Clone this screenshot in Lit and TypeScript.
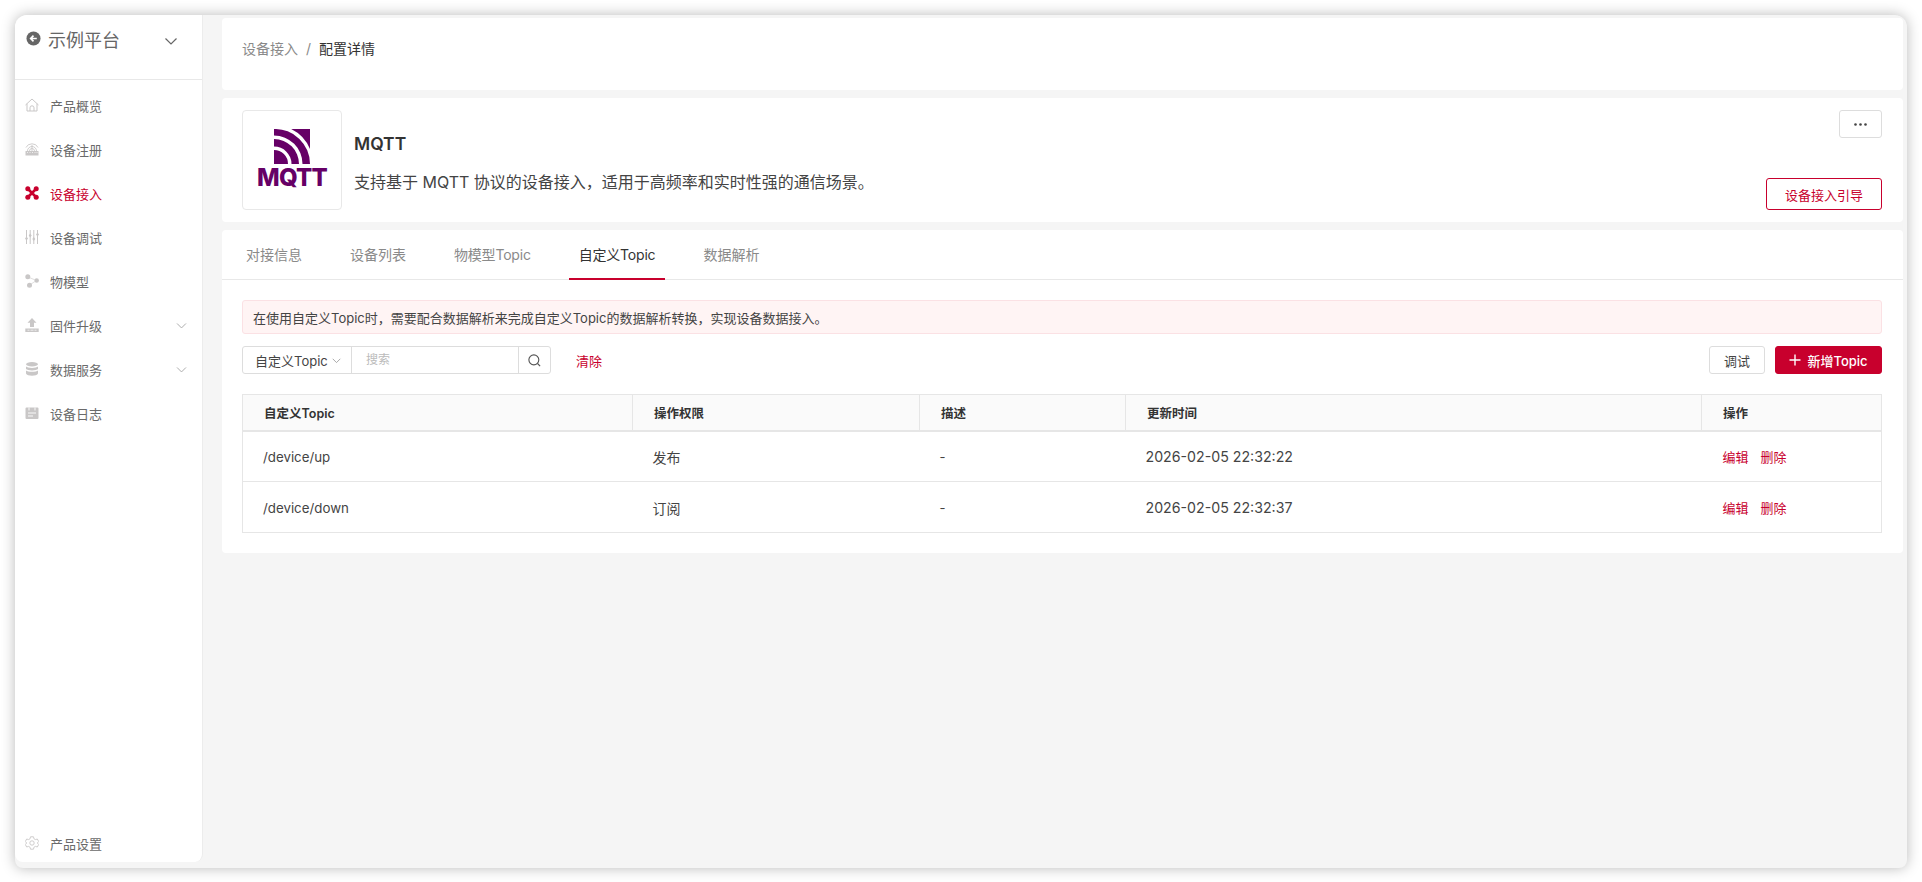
import { LitElement, html, css, svg } from "lit";
import { customElement } from "lit/decorators.js";

const chevron = (s: number) => html`<svg class="chev" width="${s}" height="${s}" viewBox="0 0 16 16" fill="none" stroke="currentColor" stroke-width="1.2"><path d="M2.5 5.5 8 11l5.5-5.5"/></svg>`;

const icons: Record<string, any> = {
  home: svg`<path d="M.5 7 7 1l6.500 6M2 5.800V13h10V5.800M5 13V9.800a2 2 0 0 1 4 0V13" fill="none" stroke="currentColor"/>`,
  reg: svg`<path d="M.5 9h13v4.500H.5z" fill="currentColor"/><path d="M2.500 9a4.500 4.500 0 0 1 9 0M4.500 9a2.500 2.500 0 0 1 5 0M1 5.500a6.500 6 0 0 1 12 0M7 3v6" fill="none" stroke="currentColor" stroke-width=".9"/><path d="M2 10.500h1M4.500 10.500h1M7 10.500h1M9.500 10.500h1M11.500 10.500h1" stroke="#fff" stroke-width=".7"/>`,
  access: svg`<path d="M3 3l8 8M11 3l-8 8" stroke="currentColor" stroke-width="2.600"/><circle cx="2.800" cy="2.800" r="2.500" fill="currentColor"/><circle cx="11.200" cy="2.800" r="2.500" fill="currentColor"/><circle cx="2.800" cy="11.200" r="2.500" fill="currentColor"/><circle cx="11.200" cy="11.200" r="2.500" fill="currentColor"/>`,
  debug: svg`<path d="M1.500 0v14M5.200 0v14M8.800 0v14M12.500 0v14" stroke="currentColor"/><path d="M1.500 6.500 3 8.500 1.500 10.500 0 8.500zM5.200 3.500l1.500 2-1.500 2-1.500-2zM8.800 7l1.500 2-1.500 2-1.500-2zM12.500 2.500l1.500 2-1.500 2-1.500-2z" fill="currentColor"/>`,
  model: svg`<circle cx="2.800" cy="2.800" r="2.500" fill="currentColor"/><circle cx="11.700" cy="6.500" r="2.200" fill="currentColor"/><circle cx="4.500" cy="11.300" r="2.500" fill="currentColor"/><path d="M3 3l8.500 3.500L4.500 11" fill="none" stroke="currentColor" stroke-width=".6"/>`,
  upload: svg`<path d="M7 0 11.500 4.800H9V9H5V4.800H2.500z" fill="currentColor"/><path d="M.3 10.500h13.400V14H.3z" fill="currentColor"/><path d="M2.500 12.200h2M5.500 12.200h3M9.500 12.200h2" stroke="#fff" stroke-width=".7"/>`,
  data: svg`<ellipse cx="7" cy="2.300" rx="6" ry="2.200" fill="currentColor"/><path d="M1 4.600c1.500 1.700 10.500 1.700 12 0V7c-1.500 1.900-10.500 1.900-12 0zM1 8.400c1.500 1.700 10.500 1.700 12 0V11.500c-1 3-11 3-12 0z" fill="currentColor"/>`,
  log: svg`<path d="M1.500 1.500h11a1 1 0 0 1 1 1V12a1 1 0 0 1-1 1h-11a1 1 0 0 1-1-1V2.500a1 1 0 0 1 1-1z" fill="currentColor"/><path d="M4 1.500v3M10 1.500v3M3 7h8M3 10h5" stroke="#fff" stroke-width=".9" fill="none"/>`,
  gear: svg`<path d="M5.500.8h3l.4 1.900 1.500.9 1.900-.6 1.400 2.500-1.400 1.500 1.400 1.500-1.400 2.500-1.900-.6-1.500.9-.4 1.900h-3l-.4-1.900-1.500-.9-1.900.6L.3 8.500 1.700 7 .3 5.500l1.400-2.500 1.900.6 1.500-.9z" fill="none" stroke="currentColor" stroke-width=".9"/><circle cx="7" cy="7" r="2.200" fill="none" stroke="currentColor" stroke-width=".9"/>`,
};

const NAV: [string, string, boolean?, boolean?][] = [
  ["home", "产品概览"],
  ["reg", "设备注册"],
  ["access", "设备接入", true],
  ["debug", "设备调试"],
  ["model", "物模型"],
  ["upload", "固件升级", false, true],
  ["data", "数据服务", false, true],
  ["log", "设备日志"],
];

const ROWS = [
  ["/device/up", "发布", "-", "2026-02-05 22:32:22"],
  ["/device/down", "订阅", "-", "2026-02-05 22:32:37"],
];

@customElement("app-root")
export class AppRoot extends LitElement {
  static styles = css`
    :host { display: block; height: 882px; background: #fff; font-family: Inter, "Noto Sans CJK SC", sans-serif; color: #333; font-size: 13px; padding: 15px 15px 14px; box-sizing: border-box; }
    .win { height: 100%; display: flex; background: #f5f5f5; border-radius: 12px 12px 8px 8px; box-shadow: 0 0 14px rgba(0,0,0,.28); }
    .side { width: 187px; height: 847px; flex: none; background: #fff; border-radius: 12px 0 8px 8px; border-right: 1px solid #ececec; display: flex; flex-direction: column; color: #6a6a6a; }
    .head { height: 65px; flex: none; display: flex; align-items: flex-start; padding: 12px 23px 0 11px; box-sizing: border-box; border-bottom: 1px solid #e8e8e8; font-size: 18px; color: #666; gap: 7px; }
    .head .back { margin-top: 4px; width: 15px; height: 15px; flex: none; }
    .head span { flex: 1; line-height: 28px; }
    .head .chev { margin-top: 6px; color: #666; }
    nav { display: flex; flex-direction: column; padding-top: 3px; flex: 1; }
    .item { height: 44px; display: flex; align-items: center; padding: 0 14px 0 10px; gap: 11px; flex: none; }
    .item svg.ic { width: 14px; height: 14px; color: #c9c7c7; flex: none; }
    .item span { flex: 1; }
    .item .chev { color: #aaa; }
    .item.on { color: #c8002d; }
    .item.on svg.ic { color: #c8002d; }
    .foot { margin-top: auto; margin-bottom: -3px; }
    main { flex: 1; min-width: 0; display: flex; flex-direction: column; gap: 8px; padding: 3px 4px 0 19px; }
    .card { background: #fff; border-radius: 4px; }
    .crumb { height: 72px; flex: none; display: flex; gap: 8px; padding: 22px 20px 0; box-sizing: border-box; line-height: 18px; color: #8a8a8a; font-size: 14px; }
    .crumb b { font-weight: 400; color: #333; }
    .info { height: 124px; flex: none; display: flex; padding: 12px 21px 12px 20px; box-sizing: border-box; gap: 12px; }
    .logo { width: 100px; height: 100px; flex: none; box-sizing: border-box; border: 1px solid #e8e8e8; border-radius: 4px; display: flex; flex-direction: column; align-items: center; padding-top: 18px; }
    .logo svg { display: block; }
    .logo span { font-weight: 800; font-size: 24px; line-height: 22px; color: #660066; letter-spacing: -.8px; margin-top: 3px; }
    .meta { flex: 1; display: flex; flex-direction: column; }
    .meta h1 { margin: 24px 0 0; font-size: 17.500px; line-height: 20px; font-weight: 600; color: #333; }
    .meta p { margin: 18px 0 0; font-size: 16px; line-height: 20px; color: #444; }
    .acts { display: flex; flex-direction: column; justify-content: space-between; align-items: flex-end; height: 100px; margin-top: -2px; padding-top: 2px; box-sizing: content-box; }
    .btn { box-sizing: border-box; border: 1px solid #ddd; border-radius: 3px; background: #fff; display: flex; align-items: center; justify-content: center; color: #333; font: inherit; font-size: 13px; padding: 0; }
    .more { width: 43px; height: 28px; }
    .guide { width: 116px; height: 32px; border-color: #c8002d; color: #c8002d; font-size: 13px; }
    .panel { height: 323px; flex: none; }
    .tabs { display: flex; height: 50px; box-sizing: border-box; border-bottom: 1px solid #e8e8e8; padding-left: 14px; color: #8a8a8a; font-size: 14px; }
    .tab { padding: 0 10px; margin-right: 28px; line-height: 50px; height: 50px; box-sizing: border-box; }
    .tab.lat { letter-spacing: -.2px; }
    .tab.on { color: #333; border-bottom: 2px solid #c8002d; }
    .body { padding: 20px 21px 0 20px; display: flex; flex-direction: column; }
    .alert { height: 34px; box-sizing: border-box; border: 1px solid #fbe1e4; background: #fff4f4; border-radius: 3px; padding: 0 10px; display: flex; align-items: center; font-size: 13px; color: #444; }
    .bar { display: flex; align-items: center; margin-top: 12px; height: 28px; }
    .group { display: flex; height: 28px; box-sizing: border-box; border: 1px solid #ddd; border-radius: 3px; }
    .sel { width: 109px; box-sizing: border-box; border-right: 1px solid #ddd; display: flex; align-items: center; padding-left: 12px; gap: 3px; font-size: 13px; color: #444; }
    .sel .chev { color: #999; }
    .inp { width: 167px; box-sizing: border-box; border-right: 1px solid #ddd; padding-left: 14px; color: #bbb; font-size: 12px; line-height: 25px; }
    .sbtn { width: 31px; display: flex; align-items: center; justify-content: center; color: #555; }
    .clear { margin-left: 25px; color: #c8002d; flex: 1; }
    .dbg { width: 56px; height: 28px; color: #444; }
    .add { width: 107px; height: 28px; margin-left: 10px; background: #c8002d; border-color: #c8002d; color: #fff; font-weight: 500; gap: 6px; }
    table { margin-top: 20px; width: 100%; border-collapse: collapse; table-layout: fixed; border: 1px solid #e6e6e6; font-size: 13px; }
    th { height: 36px; padding: 0 0 0 21px; text-align: left; background: #fafafa; font-weight: 600; font-size: 12.500px; border-right: 1px solid #e6e6e6; border-bottom: 2px solid #e6e6e6; color: #333; box-sizing: border-box; }
    th:last-child { border-right: 0; }
    td { height: 51px; padding: 1px 0 0 20px; border-bottom: 1px solid #e6e6e6; color: #444; box-sizing: border-box; }
    td.c0 { font-size: 13.300px; }
    td.c1 { font-size: 14px; }
    td.c3 { font-size: 14.200px; }
    td a { color: #c8002d; font-size: 13px; margin-right: 12px; }
    td:last-child { padding-left: 21px; }
  `;

  private icon(n: string) {
    return html`<svg class="ic" viewBox="0 0 14 14">${icons[n]}</svg>`;
  }

  render() {
    return html`<div class="win">
      <aside class="side">
        <div class="head">
          <svg class="back" viewBox="0 0 16 16"><circle cx="8" cy="8" r="7.500" fill="#666"/><path d="M11.500 8H5.500M8 5 5 8l3 3" fill="none" stroke="#fff" stroke-width="1.800"/></svg>
          <span>示例平台</span>
          ${chevron(16)}
        </div>
        <nav>
          ${NAV.map(([i, t, on, ch]) => html`<div class="item ${on ? "on" : ""}">${this.icon(i)}<span>${t}</span>${ch ? chevron(13) : ""}</div>`)}
          <div class="item foot">${this.icon("gear")}<span>产品设置</span></div>
        </nav>
      </aside>
      <main>
        <div class="card crumb"><span>设备接入</span><span>/</span><b>配置详情</b></div>
        <div class="card info">
          <div class="logo">
            <svg width="36" height="35" viewBox="0 0 36 35" fill="#660066"><path d="M0 35V21A14 14 0 0 1 14 35ZM0 10A25 25 0 0 1 25 35H17.500A17.500 17.500 0 0 0 0 17.500ZM0 0A35 35 0 0 1 36 35H28.500A28.500 28.500 0 0 0 0 6.500ZM17.200 0H36V20A39 39 0 0 0 17.200 0Z"/></svg>
            <span>MQTT</span>
          </div>
          <div class="meta"><h1>MQTT</h1><p>支持基于 MQTT 协议的设备接入，适用于高频率和实时性强的通信场景。</p></div>
          <div class="acts">
            <button class="btn more"><svg width="13" height="3" viewBox="0 0 13 3" fill="#444"><circle cx="1.500" cy="1.500" r="1.300"/><circle cx="6.500" cy="1.500" r="1.300"/><circle cx="11.500" cy="1.500" r="1.300"/></svg></button>
            <button class="btn guide">设备接入引导</button>
          </div>
        </div>
        <div class="card panel">
          <div class="tabs">
            <div class="tab">对接信息</div><div class="tab">设备列表</div><div class="tab lat">物模型Topic</div><div class="tab lat on">自定义Topic</div><div class="tab">数据解析</div>
          </div>
          <div class="body">
            <div class="alert">在使用自定义Topic时，需要配合数据解析来完成自定义Topic的数据解析转换，实现设备数据接入。</div>
            <div class="bar">
              <div class="group">
                <div class="sel">自定义Topic ${chevron(11)}</div>
                <div class="inp">搜索</div>
                <div class="sbtn"><svg width="15" height="15" viewBox="0 0 16 16" fill="none" stroke="currentColor" stroke-width="1.200"><circle cx="7.300" cy="7.300" r="5.300"/><path d="M11.200 11.200 14 14"/></svg></div>
              </div>
              <div class="clear">清除</div>
              <button class="btn dbg">调试</button>
              <button class="btn add"><svg width="12" height="12" viewBox="0 0 12 12" stroke="currentColor" stroke-width="1.400"><path d="M6 .5v11M.5 6h11"/></svg>新增Topic</button>
            </div>
            <table>
              <colgroup><col style="width:390px"/><col style="width:287px"/><col style="width:206px"/><col style="width:576px"/><col/></colgroup>
              <thead><tr><th>自定义Topic</th><th>操作权限</th><th>描述</th><th>更新时间</th><th>操作</th></tr></thead>
              <tbody>
                ${ROWS.map((r) => html`<tr>${r.map((c, i) => html`<td class="c${i}">${c}</td>`)}<td><a>编辑</a><a>删除</a></td></tr>`)}
              </tbody>
            </table>
          </div>
        </div>
      </main>
    </div>`;
  }
}
